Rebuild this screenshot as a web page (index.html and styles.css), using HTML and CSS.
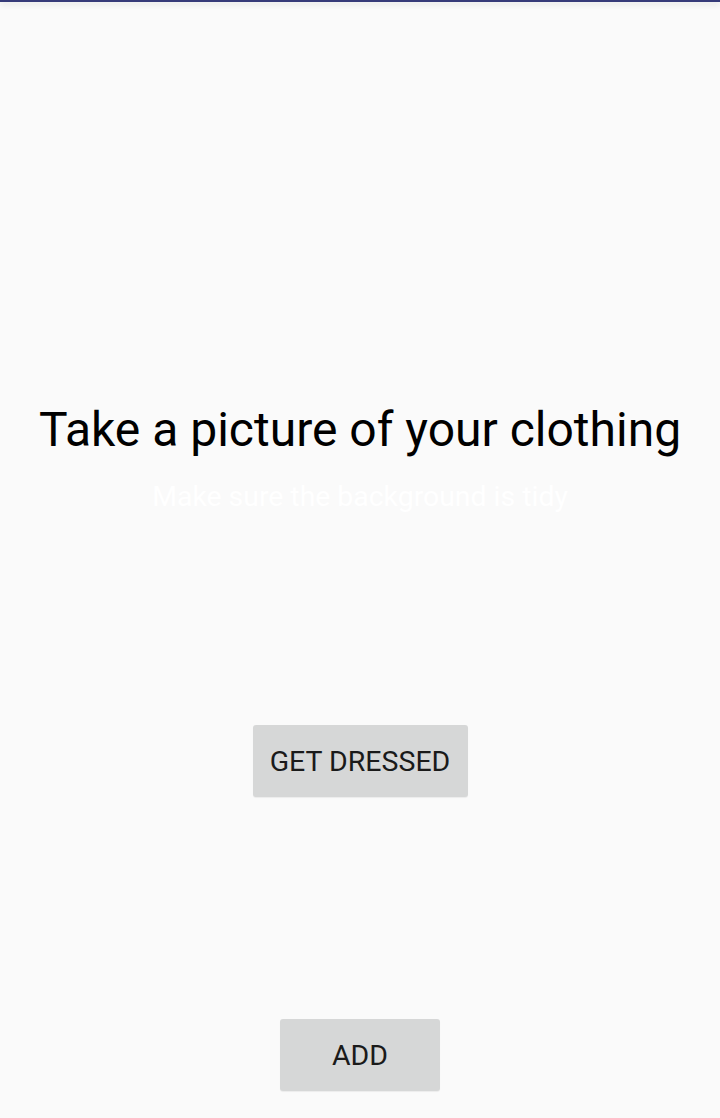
FILE: index.html
```html
<!DOCTYPE html>
<html>
<head>
<meta charset="utf-8">
<link rel="stylesheet" href="styles.css">
</head>
<body>
<div class="screen">
  <div class="topbar"></div>
  <h1 class="title">Take a picture of your clothing</h1>
  <p class="subtitle">Make sure the background is tidy</p>
  <button class="btn btn-dress">GET DRESSED</button>
  <button class="btn btn-add">ADD</button>
</div>
</body>
</html>
```
FILE: styles.css
```css
html, body {
  margin: 0;
  padding: 0;
  background: #fafafa;
}
.screen {
  width: 720px;
  height: 1118px;
  display: flex;
  flex-direction: column;
  align-items: center;
  font-family: Roboto, "Liberation Sans", sans-serif;
  overflow: hidden;
}
.topbar {
  align-self: stretch;
  height: 2px;
  background: #353a78;
  box-shadow: 0 2px 6px rgba(0, 0, 0, 0.18);
}
.title {
  margin: 398px 0 0;
  font-size: 48px;
  line-height: 60px;
  font-weight: 400;
  color: #000;
  white-space: nowrap;
}
.subtitle {
  margin: 20px 0 0;
  font-size: 28.4px;
  line-height: 34px;
  color: #ffffff;
}
.btn {
  border: none;
  border-radius: 3px;
  background: #d6d7d7;
  color: #1a1a1a;
  font-family: Roboto, "Liberation Sans", sans-serif;
  font-size: 28.5px;
  height: 72px;
  padding: 0;
  box-shadow: 0 1px 1px rgba(0, 0, 0, 0.06);
}
.btn-dress {
  margin-top: 211px;
  width: 215px;
}
.btn-add {
  margin-top: 222px;
  width: 160px;
}
```
